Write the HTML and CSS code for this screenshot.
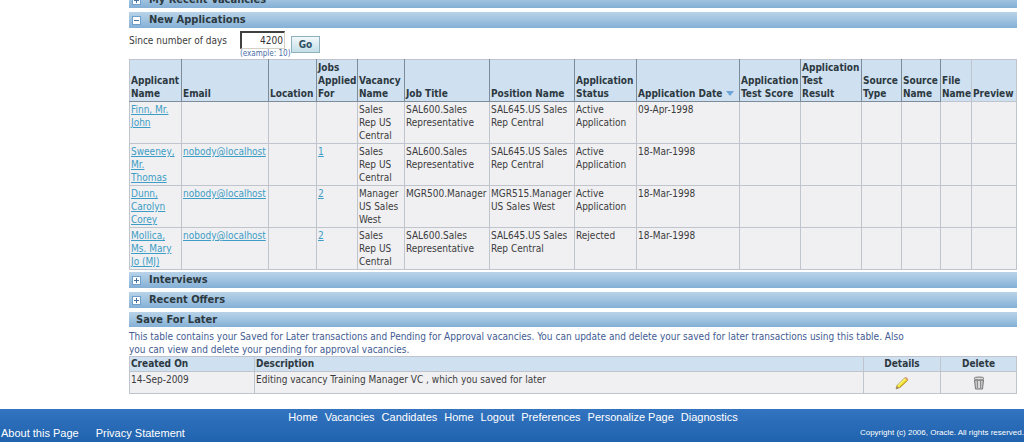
FILE: index.html
```html
<!DOCTYPE html>
<html lang="en">
<head>
<meta charset="utf-8">
<title>Recruiting Home</title>
<link rel="stylesheet" href="styles.css">
</head>
<body>
<main class="content">
  <h2 class="bar"><button class="toggle plus" aria-label="Show My Recent Vacancies"></button>My Recent Vacancies</h2>
  <h2 class="bar"><button class="toggle" aria-label="Hide New Applications"></button>New Applications</h2>
  <form class="filter">
    <label for="days">Since number of days</label>
    <div class="field">
      <input id="days" type="text" value="4200">
      <span class="hint">(example: 10)</span>
    </div>
    <button class="go" type="button">Go</button>
  </form>
  <table class="grid applications">
    <colgroup>
      <col class="w-name"><col class="w-email"><col class="w-loc"><col class="w-jobs"><col class="w-vac"><col class="w-title"><col class="w-title"><col class="w-status"><col class="w-date"><col class="w-test"><col class="w-test"><col class="w-type"><col class="w-source"><col class="w-file"><col>
    </colgroup>
    <thead>
      <tr><th>Applicant Name</th><th>Email</th><th>Location</th><th>Jobs Applied For</th><th>Vacancy Name</th><th>Job Title</th><th>Position Name</th><th>Application Status</th><th class="nowrap">Application Date <svg class="sort" viewBox="0 0 8 5" aria-hidden="true"><path d="M0 0H8L4 5Z" fill="#6fa5d6"/></svg></th><th>Application Test Score</th><th>Application Test<br>Result</th><th>Source Type</th><th>Source Name</th><th class="flat">File Name</th><th class="flat">Preview</th></tr>
    </thead>
    <tbody>
      <tr><td><a href="#">Finn, Mr. John</a></td><td></td><td></td><td></td><td>Sales<br>Rep US Central</td><td>SAL600.Sales Representative</td><td>SAL645.US Sales Rep Central</td><td>Active Application</td><td>09-Apr-1998</td><td></td><td></td><td></td><td></td><td></td><td></td></tr>
      <tr><td><a href="#">Sweeney, Mr.<br>Thomas</a></td><td><a href="#">nobody@localhost</a></td><td></td><td><a href="#">1</a></td><td>Sales<br>Rep US Central</td><td>SAL600.Sales Representative</td><td>SAL645.US Sales Rep Central</td><td>Active Application</td><td>18-Mar-1998</td><td></td><td></td><td></td><td></td><td></td><td></td></tr>
      <tr><td><a href="#">Dunn,<br>Carolyn Corey</a></td><td><a href="#">nobody@localhost</a></td><td></td><td><a href="#">2</a></td><td>Manager US Sales West</td><td>MGR500.Manager</td><td>MGR515.Manager US Sales West</td><td>Active Application</td><td>18-Mar-1998</td><td></td><td></td><td></td><td></td><td></td><td></td></tr>
      <tr><td><a href="#">Mollica,<br>Ms. Mary<br>Jo (MJ)</a></td><td><a href="#">nobody@localhost</a></td><td></td><td><a href="#">2</a></td><td>Sales<br>Rep US Central</td><td>SAL600.Sales Representative</td><td>SAL645.US Sales Rep Central</td><td>Rejected</td><td>18-Mar-1998</td><td></td><td></td><td></td><td></td><td></td><td></td></tr>
    </tbody>
  </table>
  <h2 class="bar"><button class="toggle plus" aria-label="Show Interviews"></button>Interviews</h2>
  <h2 class="bar"><button class="toggle plus" aria-label="Show Recent Offers"></button>Recent Offers</h2>
  <h2 class="bar plain">Save For Later</h2>
  <p class="intro">This table contains your Saved for Later transactions and Pending for Approval vacancies. You can update and delete your saved for later transactions using this table. Also<br>you can view and delete your pending for approval vacancies.</p>
  <table class="grid saved">
    <colgroup><col class="w-created"><col><col class="w-details"><col class="w-delete"></colgroup>
    <thead><tr><th>Created On</th><th>Description</th><th class="center">Details</th><th class="center">Delete</th></tr></thead>
    <tbody>
      <tr>
        <td>14-Sep-2009</td>
        <td>Editing vacancy Training Manager VC , which you saved for later</td>
        <td class="center"><button class="action" aria-label="Details"><svg viewBox="0 0 14 14"><path d="M1 13L2 9.500L10 1.500L13 4L5 11.500Z" fill="#f4e536" stroke="#9a8a3c" stroke-width=".7"/><path d="M3.500 9L10 2.800" stroke="#fffbb0"/><path d="M5 11L12 4.800" stroke="#c49a1c"/><path d="M9.500 2L11 1L13.500 3L12.500 4.500Z" fill="#d9a080"/><path d="M1 13L1.800 10L4 12Z" fill="#a08070"/></svg></button></td>
        <td class="center"><button class="action" aria-label="Delete"><svg viewBox="0 0 14 14"><path d="M2.500 4L3.500 13H10.500L11.500 4Z" fill="#c4c4c4" stroke="#777"/><path d="M5.500 5V12M8.500 5V12" stroke="#8c8c8c"/><path d="M7 5V12" stroke="#eee"/><ellipse cx="7" cy="2.500" rx="5" ry="1.500" fill="#ddd" stroke="#777"/></svg></button></td>
      </tr>
    </tbody>
  </table>
</main>
<footer class="footer">
  <nav class="links"><a href="#">Home</a><a href="#">Vacancies</a><a href="#">Candidates</a><a href="#">Home</a><a href="#">Logout</a><a href="#">Preferences</a><a href="#">Personalize Page</a><a href="#">Diagnostics</a></nav>
  <div class="legal"><a href="#">About this Page</a><a href="#">Privacy Statement</a><span class="copy">Copyright (c) 2006, Oracle. All rights reserved.</span></div>
</footer>
</body>
</html>
```
FILE: styles.css
```css
* { box-sizing: border-box; }
body {
  margin: 0;
  overflow: hidden;
  background: #fff;
  color: #3c3c3c;
  font: 10px/13px "DejaVu Sans Condensed", "DejaVu Sans", sans-serif;
}
a { color: #3d9dc4; }
.content { margin: -8px 7px 0 129px; }
.bar {
  display: flex;
  align-items: center;
  gap: 8px;
  height: 16px;
  margin: 0 0 4px;
  padding-left: 3px;
  background: linear-gradient(#b9d3e9, #9fc3e0 50%, #84afd5);
  color: #2c3940;
  font: bold 11px/16px "DejaVu Sans Condensed", sans-serif;
}
.bar.plain { height: 15px; margin-bottom: 3px; padding-left: 7px; }
.toggle {
  width: 9px;
  height: 9px;
  padding: 0;
  border: 1px solid #6f9fcb;
  background: linear-gradient(#456f9c, #456f9c) center / 5px 1px no-repeat #fff;
}
.toggle.plus {
  background: linear-gradient(#456f9c, #456f9c) center / 5px 1px no-repeat,
    linear-gradient(#456f9c, #456f9c) center / 1px 5px no-repeat #fff;
}
.filter { display: flex; align-items: flex-start; height: 28px; margin: -1px 0 0; }
.filter label { width: 111px; padding-top: 3px; white-space: nowrap; }
.field { display: flex; flex-direction: column; width: 51px; }
.field input {
  width: 45px;
  height: 18px;
  padding: 0 1px;
  border: 1px solid #d4d0c8;
  border-top: 2px solid #404040;
  border-left: 2px solid #404040;
  color: #333;
  font: inherit;
  text-align: right;
}
.hint { color: #4a6da8; font-size: 8px; line-height: 10px; white-space: nowrap; }
.go {
  width: 29px;
  height: 17px;
  margin-top: 5px;
  padding: 0;
  border: 1px solid #8fb0bd;
  background: linear-gradient(#f2f8fa, #c3dfe8);
  color: #2f5163;
  font: bold 10px/13px "DejaVu Sans Condensed", sans-serif;
}
.grid { width: 100%; border-collapse: collapse; table-layout: fixed; }
.grid th, .grid td {
  padding: 1px;
  border: 1px solid #c0c4cc;
  text-align: left;
  vertical-align: top;
}
.grid th {
  background: #cfe0f1;
  color: #2c3940;
  font-weight: bold;
  vertical-align: bottom;
}
.grid td { height: 42px; background: #f0f0f3; }
.grid .center { text-align: center; }
.grid .nowrap { white-space: nowrap; }
.applications { margin-bottom: 2px; }
.applications th { height: 42px; border-right-color: #7d8c9b; border-bottom-color: #7d8c9b; }
.applications .flat { border-right-color: #c0c4cc; border-bottom-color: #c0c4cc; }
.sort { width: 8px; height: 5px; vertical-align: 1px; }
.w-name { width: 52px; }
.w-email { width: 87px; }
.w-loc { width: 48px; }
.w-jobs { width: 41px; }
.w-vac { width: 47px; }
.w-title { width: 85px; }
.w-status { width: 62px; }
.w-date { width: 103px; }
.w-test { width: 61px; }
.w-type { width: 40px; }
.w-source { width: 39px; }
.w-file { width: 31px; }
.w-created { width: 125px; }
.w-details { width: 77px; }
.w-delete { width: 76px; }
.intro { margin: 0; color: #435c94; }
.saved th { padding-top: 0; }
.saved td { height: 22px; }
.action { width: 14px; height: 14px; margin-top: 3px; padding: 0; border: 0; background: none; vertical-align: top; }
.action svg { display: block; width: 14px; height: 14px; }
.footer {
  height: 33px;
  margin-top: 15px;
  background: linear-gradient(#3374c0, #1f62ad);
  color: #fff;
  font: 11px/16px "Liberation Sans", Arial, sans-serif;
}
.footer a { color: #fff; text-decoration: none; }
.links { display: flex; justify-content: center; gap: 7px; padding-left: 2px; }
.legal { display: flex; gap: 17px; padding-left: 1px; }
.copy { margin-left: auto; font-size: 8px; white-space: nowrap; }
```
